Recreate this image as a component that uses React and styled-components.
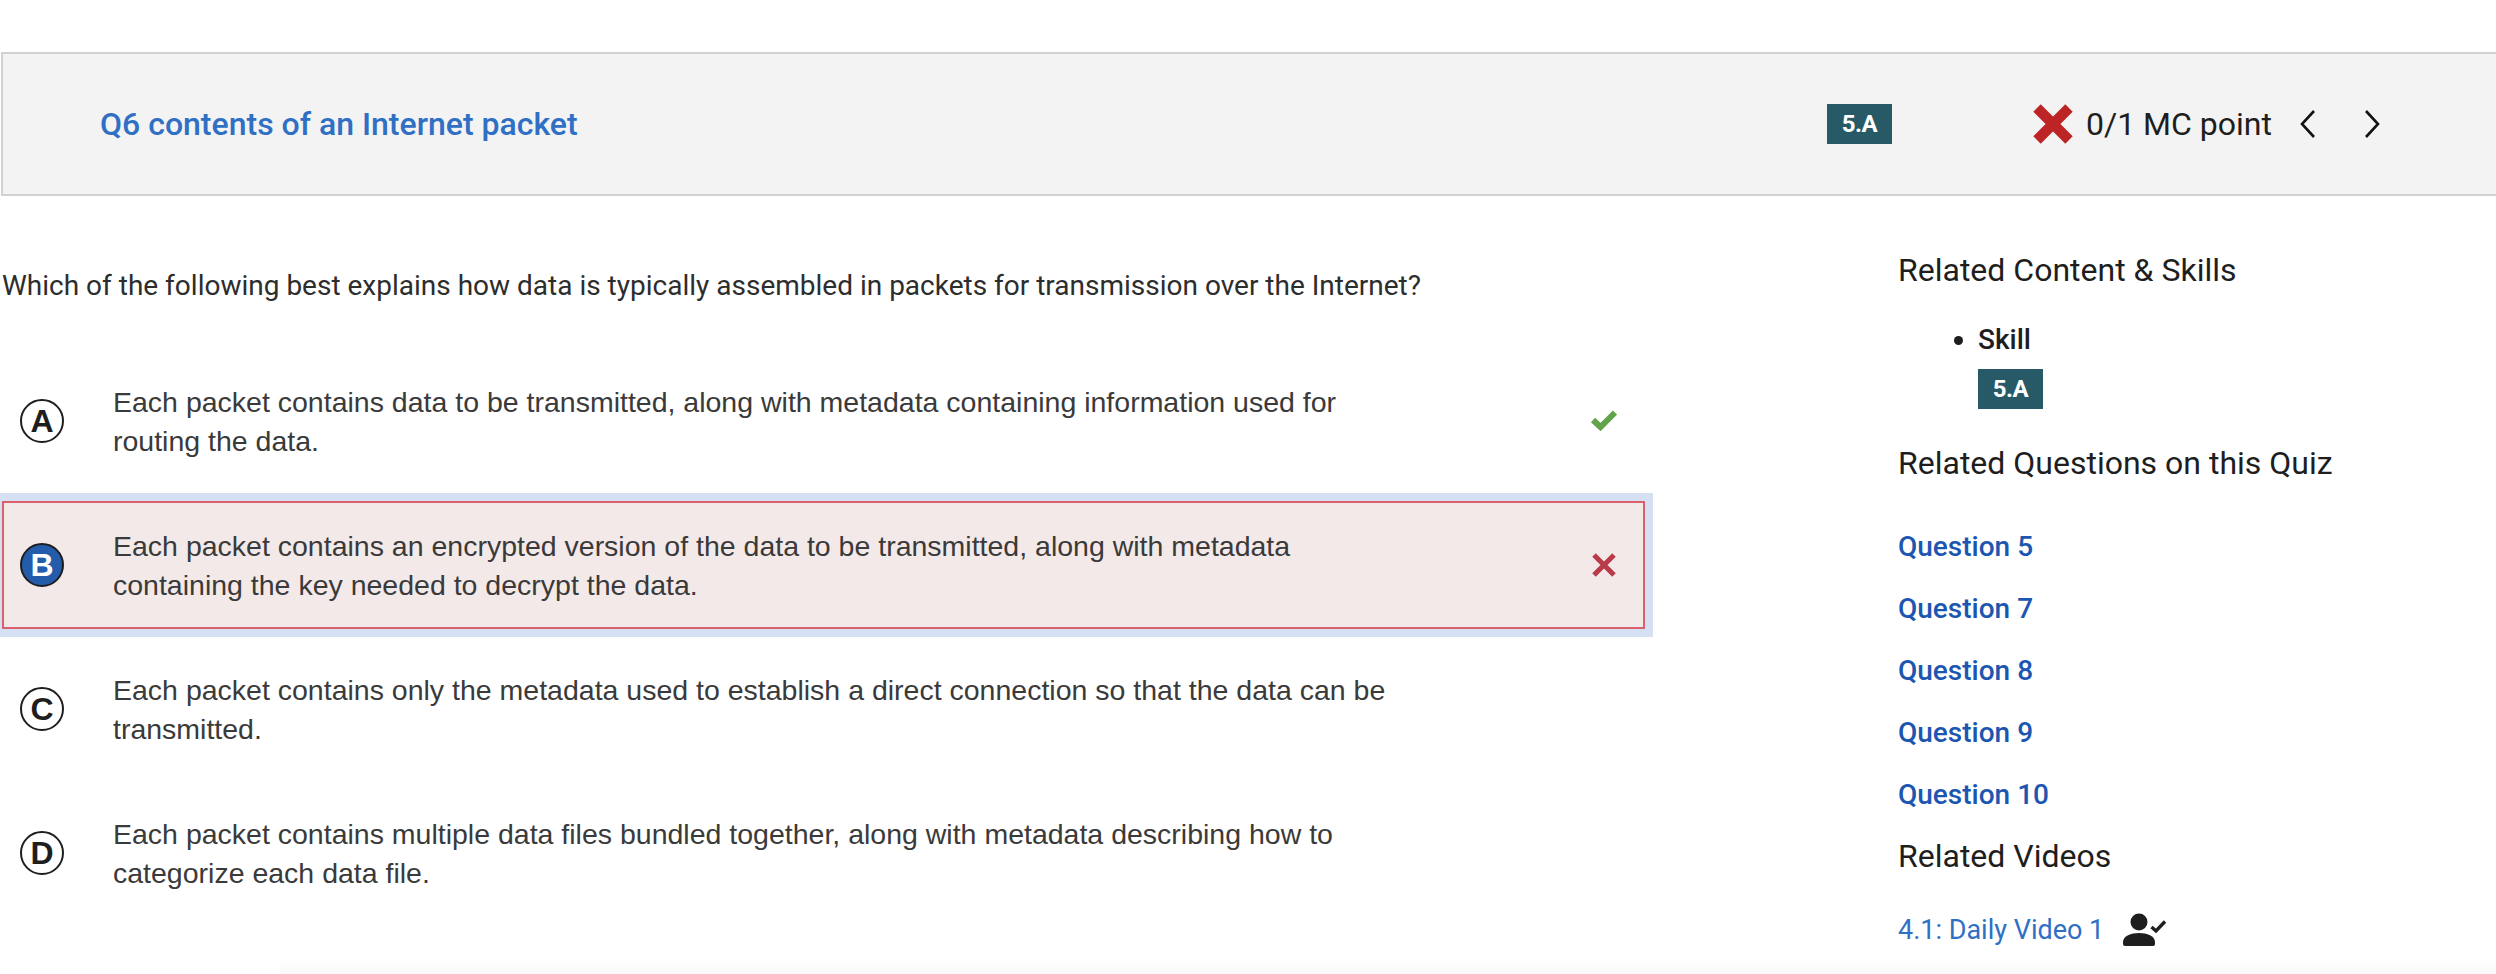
import React from 'react';
import styled, { createGlobalStyle } from 'styled-components';

const GlobalStyle = createGlobalStyle`
  html, body { margin: 0; padding: 0; background: #fff; }
  body { font-family: Roboto, sans-serif; color: #1e1e1e; }
`;

const Page = styled.div`
  position: relative;
  width: 2496px;
  height: 974px;
  padding-top: 52px;
  box-sizing: border-box;
  overflow: hidden;
`;

const BottomFade = styled.div`
  position: absolute;
  left: 280px;
  right: 0;
  bottom: 0;
  height: 16px;
  background: linear-gradient(#ffffff00, #f9f9f9);
  pointer-events: none;
`;

const Header = styled.header`
  display: flex;
  align-items: center;
  height: 144px;
  margin-left: 1px;
  padding-left: 97px;
  box-sizing: border-box;
  background: #f3f3f3;
  border: 2px solid #d2d2d6;
  border-right: none;
`;

const Title = styled.a`
  width: 1727px;
  font-size: 32px;
  font-weight: 500;
  color: #2f6fc4;
`;

const Badge = styled.span`
  display: inline-flex;
  align-items: center;
  justify-content: center;
  width: 65px;
  height: 40px;
  background: #275a66;
  color: #fff;
  font-size: 24px;
  font-weight: 700;
  letter-spacing: -0.5px;
`;

const Score = styled.div`
  display: flex;
  align-items: center;
  margin-left: 140px;
  font-size: 32px;
  color: #1e1e1e;
`;

const ScoreText = styled.span`
  margin-left: 12px;
`;

const NavButton = styled.span`
  display: inline-flex;
  margin-left: ${(p) => p.$gap}px;
`;

const Body = styled.div`
  display: flex;
`;

const Main = styled.main`
  width: 1653px;
  flex: none;
`;

const Question = styled.p`
  margin: 72px 0 0 2px;
  font-size: 28px;
  font-weight: 400;
  line-height: 36px;
  color: #2d2d2d;
`;

const Options = styled.div`
  margin-top: 45px;
`;

const Option = styled.div`
  display: flex;
  align-items: center;
  height: 144px;
  box-sizing: border-box;
  ${(p) => p.$selected && `
    border: solid #d5e1f2;
    border-width: 8px 8px 8px 0;
    background: #d5e1f2;
  `}
`;

const OptionBody = styled.div`
  display: flex;
  align-items: center;
  flex: 1;
  align-self: stretch;
  margin-left: 2px;
  padding-left: 18px;
  box-sizing: border-box;
  ${(p) => p.$selected && `
    border: 2px solid #d9606c;
    background: #f4e9e9;
    padding-left: 16px;
  `}
`;

const Letter = styled.span`
  flex: none;
  display: inline-flex;
  align-items: center;
  justify-content: center;
  width: 44px;
  height: 44px;
  box-sizing: border-box;
  border: 2px solid #1e1e1e;
  border-radius: 50%;
  font-family: 'Liberation Sans', sans-serif;
  font-size: 32px;
  font-weight: 700;
  background: ${(p) => (p.$selected ? '#235cab' : 'transparent')};
  color: ${(p) => (p.$selected ? '#fff' : '#1e1e1e')};
`;

const OptionText = styled.div`
  width: 1290px;
  margin-left: 49px;
  padding-top: 1px;
  font-family: 'Liberation Sans', sans-serif;
  font-size: 28.5px;
  line-height: 39px;
  white-space: nowrap;
  color: #3a3a3a;
`;

const Mark = styled.span`
  display: inline-flex;
  justify-content: center;
  width: 28px;
  margin-left: 187px;
`;

const Aside = styled.aside`
  margin-left: 245px;
  padding-top: 54px;
`;

const SideHeading = styled.h3`
  margin: 0;
  font-size: 32px;
  font-weight: 400;
  line-height: 40px;
  color: #1e1e1e;
`;

const SkillList = styled.ul`
  margin: 34px 0 0;
  padding: 0 0 0 80px;
  height: 119px;
  box-sizing: border-box;
`;

const SkillItem = styled.li`
  font-size: 28px;
  font-weight: 500;
  line-height: 32px;
  color: #1e1e1e;
`;

const SkillBadge = styled(Badge)`
  display: flex;
  margin-top: 13px;
`;

const QuestionLinks = styled.div`
  display: flex;
  flex-direction: column;
  margin: 46px 0 -3px;
`;

const QuestionLink = styled.a`
  height: 62px;
  font-size: 28px;
  font-weight: 500;
  line-height: 36px;
  color: #1d56b0;
`;

const VideoRow = styled.div`
  display: flex;
  align-items: center;
  margin-top: 36px;
`;

const VideoLink = styled.a`
  font-size: 27px;
  line-height: 36px;
  color: #2f6fc4;
`;

const VideoIcon = styled.svg`
  flex: none;
  margin: -2px 0 0 19px;
  width: 44px;
  height: 33px;
`;

const options = [
  { letter: 'A', lines: ['Each packet contains data to be transmitted, along with metadata containing information used for', 'routing the data.'], mark: 'check' },
  { letter: 'B', lines: ['Each packet contains an encrypted version of the data to be transmitted, along with metadata', 'containing the key needed to decrypt the data.'], mark: 'cross', selected: true },
  { letter: 'C', lines: ['Each packet contains only the metadata used to establish a direct connection so that the data can be', 'transmitted.'] },
  { letter: 'D', lines: ['Each packet contains multiple data files bundled together, along with metadata describing how to', 'categorize each data file.'] },
];

function BigCross() {
  return (
    <svg width="42" height="42" viewBox="0 0 42 42">
      <path d="M5 5 L37 37 M37 5 L5 37" stroke="#bd2426" strokeWidth="10.5" />
    </svg>
  );
}

function Chevron({ flip }) {
  return (
    <svg width="18" height="30" viewBox="0 0 18 30">
      <path d={flip ? 'M3 2 L15 15 L3 28' : 'M15 2 L3 15 L15 28'} fill="none" stroke="#111" strokeWidth="2.6" />
    </svg>
  );
}

function CheckMark() {
  return (
    <svg width="28" height="22" viewBox="0 0 28 22">
      <path d="M3 10 L10.5 17 L25 2.5" fill="none" stroke="#62a44a" strokeWidth="6" />
    </svg>
  );
}

function CrossMark() {
  return (
    <svg width="26" height="26" viewBox="0 0 26 26">
      <path d="M3 3 L23 23 M23 3 L3 23" stroke="#b83b4a" strokeWidth="5" />
    </svg>
  );
}

function PersonCheck() {
  return (
    <VideoIcon viewBox="0 0 44 33">
      <circle cx="16" cy="9" r="8.5" fill="#1e1e1e" />
      <path d="M0 29 C0 23 8 20 16 20 C24 20 32 23 32 29 L32 31 Q32 33 30 33 L2 33 Q0 33 0 31 Z" fill="#1e1e1e" />
      <path d="M28.5 14 L33 18 L42 8.5" fill="none" stroke="#1e1e1e" strokeWidth="3.4" />
    </VideoIcon>
  );
}

export default function App() {
  return (
    <Page>
      <GlobalStyle />
      <Header>
        <Title>Q6 contents of an Internet packet</Title>
        <Badge>5.A</Badge>
        <Score>
          <BigCross />
          <ScoreText>0/1 MC point</ScoreText>
          <NavButton $gap={27}><Chevron /></NavButton>
          <NavButton $gap={46}><Chevron flip /></NavButton>
        </Score>
      </Header>
      <Body>
        <Main>
          <Question>Which of the following best explains how data is typically assembled in packets for transmission over the Internet?</Question>
          <Options>
            {options.map((o) => (
              <Option key={o.letter} $selected={o.selected}>
                <OptionBody $selected={o.selected}>
                  <Letter $selected={o.selected}>{o.letter}</Letter>
                  <OptionText>
                    {o.lines[0]}
                    <br />
                    {o.lines[1]}
                  </OptionText>
                  {o.mark && (
                    <Mark>{o.mark === 'check' ? <CheckMark /> : <CrossMark />}</Mark>
                  )}
                </OptionBody>
              </Option>
            ))}
          </Options>
        </Main>
        <Aside>
          <SideHeading>Related Content &amp; Skills</SideHeading>
          <SkillList>
            <SkillItem>
              Skill
              <SkillBadge>5.A</SkillBadge>
            </SkillItem>
          </SkillList>
          <SideHeading>Related Questions on this Quiz</SideHeading>
          <QuestionLinks>
            {[5, 7, 8, 9, 10].map((n) => (
              <QuestionLink key={n}>Question {n}</QuestionLink>
            ))}
          </QuestionLinks>
          <SideHeading>Related Videos</SideHeading>
          <VideoRow>
            <VideoLink>4.1: Daily Video 1</VideoLink>
            <PersonCheck />
          </VideoRow>
        </Aside>
      </Body>
      <BottomFade />
    </Page>
  );
}
